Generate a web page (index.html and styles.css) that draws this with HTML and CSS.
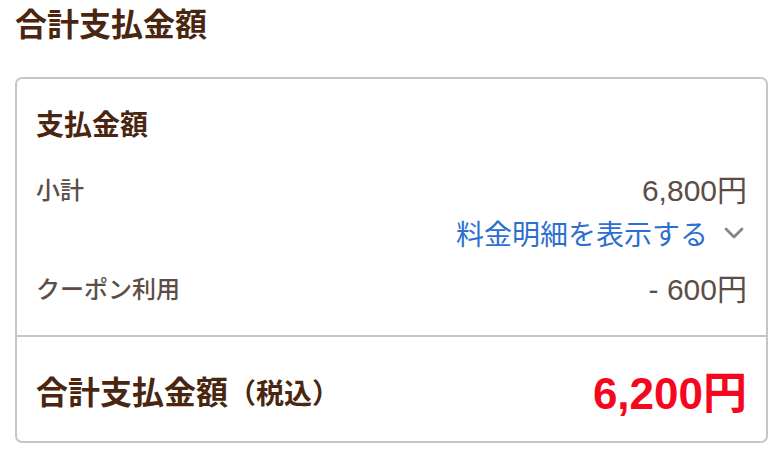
FILE: index.html
```html
<!DOCTYPE html>
<html lang="ja">
<head>
    <meta charset="UTF-8">
    <meta name="viewport" content="width=device-width, initial-scale=1.0">
    <title>合計支払金額</title>
    <link rel="stylesheet" href="styles.css">
</head>
<body>
    <div class="payment">
        <h1 class="payment-title">合計支払金額</h1>

        <div class="payment-card">
            <div class="card-body">
                <h2>支払金額</h2>

                <div class="price-row">
                    <span class="price-label">小計</span>
                    <span class="price-value">6,800円</span>
                </div>

                <!-- 明細の開閉リンク -->
                <div class="detail-toggle">
                    <a href="#">料金明細を表示する</a>
                    <svg class="chevron" width="20" height="12" viewBox="0 0 20 12">
                        <path d="M2 2 L10 10 L18 2" fill="none" stroke="#858585" stroke-width="2.8" stroke-linecap="round" stroke-linejoin="round"/>
                    </svg>
                </div>

                <div class="price-row">
                    <span class="price-label">クーポン利用</span>
                    <span class="price-value">- 600円</span>
                </div>
            </div>

            <div class="card-total">
                <span class="total-label">合計支払金額<small>（税込）</small></span>
                <span class="total-value">6,200円</span>
            </div>
        </div>
    </div>
</body>
</html>
```

FILE: styles.css
```css
body {
    margin: 0;
    background: #fff;
    font-family: "Liberation Sans", "Noto Sans CJK JP", sans-serif;
}
.payment {
    padding: 5px 12px 0 15px;
}
.payment-title {
    margin: 0 0 32px 0;
    font-size: 32px;
    line-height: 40px;
    font-weight: bold;
    color: #4a2610;
}

/* Card */
.payment-card {
    border: 2px solid #c6c6c6;
    border-radius: 7px;
}
.card-body {
    padding: 29px 19px 33px 19px;
}
.card-body h2 {
    margin: 0 0 29px 0;
    font-size: 28px;
    line-height: 36px;
    font-weight: bold;
    color: #4a2610;
}
.price-row {
    display: flex;
    justify-content: space-between;
    align-items: center;
    height: 30px;
    color: #5c4e47;
}
.price-label {
    font-size: 24px;
    font-weight: 500;
}
.price-value {
    font-size: 30px;
}
.detail-toggle {
    display: flex;
    justify-content: flex-end;
    align-items: center;
    gap: 16px;
    height: 36px;
    margin: 12px 0 21px 0;
}
.detail-toggle a {
    font-size: 28px;
    color: #2d6fd0;
    text-decoration: none;
}
.chevron {
    margin-right: 3px;
}

/* Total */
.card-total {
    display: flex;
    justify-content: space-between;
    align-items: center;
    height: 50px;
    padding: 28px 19px 26px 19px;
    border-top: 2px solid #c6c6c6;
}
.total-label {
    font-size: 32px;
    font-weight: bold;
    color: #4a2610;
}
.total-label small {
    font-size: 28px;
}
.total-value {
    font-size: 44px;
    font-weight: bold;
    color: #f5081e;
}
```
